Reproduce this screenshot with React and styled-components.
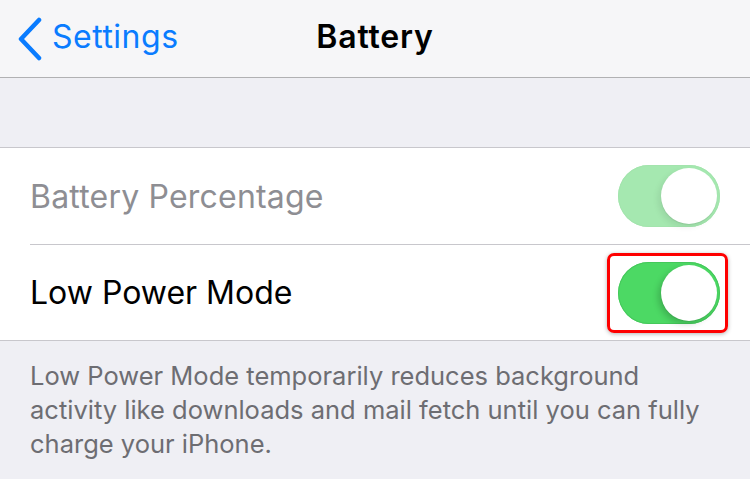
import React from 'react';
import styled, { createGlobalStyle } from 'styled-components';

const GlobalStyle = createGlobalStyle`
  body {
    margin: 0;
    background: #efeff4;
    font-family: Inter, "Liberation Sans", sans-serif;
  }
`;

const Page = styled.div`
  width: 750px;
  height: 479px;
  overflow: hidden;
  background: #efeff4;
`;

const NavBar = styled.div`
  height: 77px;
  background: #f6f6f8;
  border-bottom: 1px solid #b1b1b3;
  display: grid;
  grid-template-columns: 1fr auto 1fr;
  align-items: center;
`;

const BackLink = styled.div`
  display: flex;
  align-items: center;
  gap: 9px;
  padding-left: 17px;
  color: #0a7cff;
  font-size: 32px;
  letter-spacing: 0.5px;
`;

const BackText = styled.span`
  margin-top: -4px;
`;

const Title = styled.div`
  font-size: 32px;
  font-weight: 600;
  color: #000;
  letter-spacing: 0.8px;
  margin-top: -4px;
`;

const Spacer = styled.div`
  height: 69px;
  border-bottom: 1px solid #c8c7cc;
`;

const Group = styled.div`
  background: #fff;
  border-bottom: 1px solid #c8c7cc;
`;

const Row = styled.div`
  height: 96px;
  display: flex;
  align-items: center;
  justify-content: space-between;
  padding-left: 30px;
  padding-right: 30px;
  position: relative;
  & + & {
    border-top: 1px solid #c8c7cc;
    margin-left: 30px;
    padding-left: 0;
    height: 95px;
  }
`;

const Label = styled.div`
  font-size: 32px;
  letter-spacing: ${p => (p.$dim ? '0.2px' : '0')};
  color: ${p => (p.$dim ? '#8e8e93' : '#000')};
`;

const Track = styled.div`
  width: 102px;
  height: 62px;
  border-radius: 31px;
  background: ${p => (p.$dim ? '#a5e8b0' : '#4cd964')};
  display: flex;
  align-items: center;
  justify-content: flex-end;
  padding-right: 3px;
  box-sizing: border-box;
  box-shadow: 0 0 0 1px ${p => (p.$dim ? '#a3e4ad' : '#45c85b')} inset;
`;

const Knob = styled.div`
  width: 56px;
  height: 56px;
  border-radius: 50%;
  background: #fff;
  box-shadow: -3px 3px 6px rgba(0, 0, 0, ${p => (p.$dim ? 0.08 : 0.18)}),
    0 1px 1px rgba(0, 0, 0, 0.08);
`;

const Highlight = styled.div`
  position: absolute;
  right: 22px;
  top: 8px;
  width: 121px;
  height: 80px;
  box-sizing: border-box;
  border: 3px solid #fe0000;
  border-radius: 7px;
  box-shadow: 0 1px 4px rgba(0, 0, 0, 0.3);
`;

const Footer = styled.p`
  margin: 0;
  padding: 18px 30px 0 30px;
  font-size: 25.5px;
  line-height: 34px;
  color: #6d6d72;
`;

const Chevron = () => (
  <svg width="26" height="44" viewBox="0 0 26 44">
    <path
      d="M22 3 L4 22 L22 41"
      fill="none"
      stroke="#0a7cff"
      strokeWidth="4.5"
      strokeLinecap="round"
      strokeLinejoin="round"
    />
  </svg>
);

const Toggle = ({ dim }) => (
  <Track $dim={dim}>
    <Knob $dim={dim} />
  </Track>
);

export default function App() {
  return (
    <Page>
      <GlobalStyle />
      <NavBar>
        <BackLink>
          <Chevron />
          <BackText>Settings</BackText>
        </BackLink>
        <Title>Battery</Title>
        <div />
      </NavBar>
      <Spacer />
      <Group>
        <Row>
          <Label $dim>Battery Percentage</Label>
          <Toggle dim />
        </Row>
        <Row>
          <Label>Low Power Mode</Label>
          <Toggle />
          <Highlight />
        </Row>
      </Group>
      <Footer>
        Low Power Mode temporarily reduces background activity like downloads and mail fetch until you can fully charge your iPhone.
      </Footer>
    </Page>
  );
}
